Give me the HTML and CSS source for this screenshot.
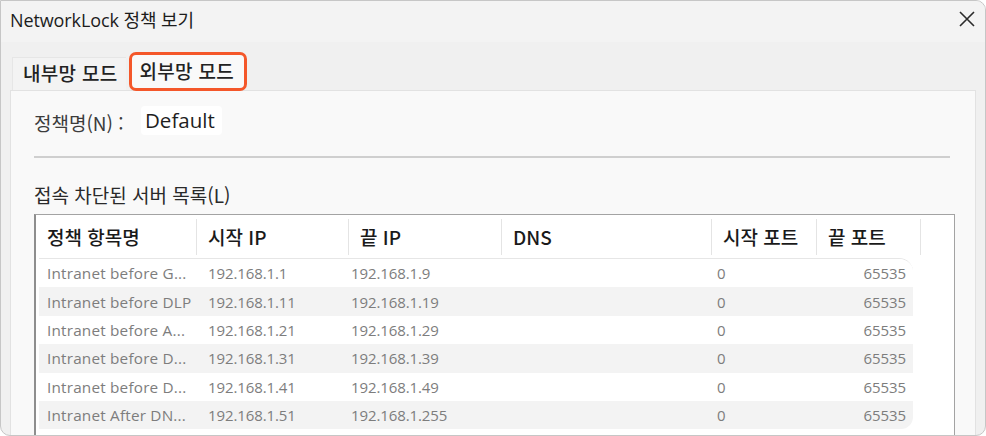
FILE: index.html
```html
<!DOCTYPE html>
<html lang="ko">

<head>
    <meta charset="utf-8">
    <title>NetworkLock 정책 보기</title>
    <link rel="stylesheet" href="styles.css">
</head>

<body>
    <div class="window">
        <div class="titlebar">
            <span class="title">NetworkLock 정책 보기</span>
            <svg class="close" width="18" height="18" viewBox="0 0 18 18">
                <path d="M2 2 L16 16 M16 2 L2 16" stroke="#2b2b2b" stroke-width="1.6" fill="none" />
            </svg>
        </div>

        <div class="tabs">
            <div class="tab">내부망 모드</div>
            <div class="tab active">외부망 모드</div>
        </div>

        <div class="panel">
            <div class="name-row">
                <span class="label">정책명(N) :</span>
                <span class="name-box">Default</span>
            </div>
            <div class="separator"></div>
            <div class="section-label">접속 차단된 서버 목록(L)</div>

            <div class="list">
                <div class="list-head">
                    <div class="col">정책 항목명</div>
                    <div class="col">시작 IP</div>
                    <div class="col">끝 IP</div>
                    <div class="col">DNS</div>
                    <div class="col">시작 포트</div>
                    <div class="col">끝 포트</div>
                </div>
                <div class="rows" id="rows"></div>
            </div>
        </div>
    </div>

    <script>
        // 차단 목록 데이터
        const items = [
            ['Intranet before G...', '192.168.1.1', '192.168.1.9', '', '0', '65535'],
            ['Intranet before DLP', '192.168.1.11', '192.168.1.19', '', '0', '65535'],
            ['Intranet before A...', '192.168.1.21', '192.168.1.29', '', '0', '65535'],
            ['Intranet before D...', '192.168.1.31', '192.168.1.39', '', '0', '65535'],
            ['Intranet before D...', '192.168.1.41', '192.168.1.49', '', '0', '65535'],
            ['Intranet After DN...', '192.168.1.51', '192.168.1.255', '', '0', '65535']
        ];

        const rows = document.getElementById('rows');
        items.forEach((item) => {
            const row = document.createElement('div');
            row.className = 'row';
            item.forEach((value) => {
                const cell = document.createElement('div');
                cell.className = 'cell';
                cell.textContent = value;
                row.appendChild(cell);
            });
            rows.appendChild(row);
        });
    </script>
</body>

</html>
```

FILE: styles.css
```css
* {
    box-sizing: border-box;
}

body {
    margin: 0;
    font-family: "Open Sans", "Noto Sans CJK KR", sans-serif;
    background-color: #ffffff;
}

.window {
    width: 986px;
    height: 436px;
    border: 1px solid #c6c6c6;
    border-radius: 0 10px 10px 10px;
    background-color: #f0f0f0;
    overflow: hidden;
    display: flex;
    flex-direction: column;
}

.titlebar {
    flex-shrink: 0;
    height: 41px;
    background-color: #f3f3f3;
    display: flex;
    align-items: center;
    justify-content: space-between;
    padding: 0 9px 0 9px;
}

.title {
    font-family: "Open Sans", "Noto Sans CJK KR", sans-serif;
    font-size: 18px;
    color: #1c1c1c;
    margin-top: -6px;
    letter-spacing: -0.1px;
}

.close {
    margin-top: -6px;
}

.tabs {
    flex-shrink: 0;
    height: 48px;
    display: flex;
    align-items: flex-end;
    padding-left: 11px;
}

.tab {
    font-family: "Noto Sans CJK KR", sans-serif;
    font-size: 19px;
    font-weight: 500;
    color: #222;
    height: 33px;
    line-height: 30px;
    padding: 0 8px 0 10px;
    background-color: #f3f3f3;
    border-left: 1px solid #e6e6e6;
    border-top: 1px solid #e6e6e6;
    letter-spacing: 0.3px;
}

.tab.active {
    height: 39px;
    margin-left: 3px;
    padding: 0 10px 0 8px;
    line-height: 32px;
    background-color: #f9f9f9;
    border: 3px solid #f4572a;
    border-radius: 7px;
    margin-bottom: -1px;
    position: relative;
}

.panel {
    flex: 1;
    min-height: 0;
    overflow: hidden;
    margin: 0 9px 0 9px;
    background-color: #f9f9f9;
    border: 1px solid #e2e2e2;
    border-bottom: none;
    padding: 15px 0 0 23px;
}

.name-row {
    display: flex;
    align-items: center;
    height: 29px;
}

.label {
    font-family: "Noto Sans CJK KR", sans-serif;
    font-size: 19px;
    color: #3c3c3c;
    width: 107px;
    margin-top: 3px;
}

.name-box {
    background-color: #ffffff;
    border-radius: 4px;
    height: 29px;
    line-height: 28px;
    padding: 0 7px 0 4px;
    font-size: 20.5px;
    color: #1e1e1e;
}

.separator {
    margin-top: 21px;
    width: 916px;
    height: 2px;
    background-color: #cfcfcf;
}

.section-label {
    font-family: "Noto Sans CJK KR", sans-serif;
    font-size: 19px;
    color: #2a2a2a;
    margin-top: 26px;
    height: 22px;
    line-height: 22px;
}

.list {
    margin-top: 8px;
    width: 921px;
    height: 240px;
    background-color: #ffffff;
    border: 1px solid #a3a3a3;
    border-left: 2px solid #8e8e8e;
    border-bottom: none;
}

.list-head {
    display: grid;
    grid-template-columns: 161px 152px 153px 210px 105px 104px;
    height: 43px;
    align-items: center;
}

.list-head .col {
    font-family: "Noto Sans CJK KR", sans-serif;
    font-size: 19px;
    font-weight: 500;
    color: #1a1a1a;
    padding-left: 11px;
    height: 36px;
    line-height: 36px;
    border-right: 1px solid #e4e4e4;
    white-space: nowrap;
}

.rows {
    margin-left: 3px;
    width: 874px;
    border-top: 1px solid #e6e6e6;
    border-radius: 0 14px 12px 0;
    overflow: hidden;
}

.row {
    display: grid;
    grid-template-columns: 158px 143px 162px 204px 100px 107px;
    height: 28.4px;
    align-items: center;
    background-color: #ffffff;
    line-height: 20px;
}

.row:nth-child(even) {
    background-color: #f3f3f3;
}

.cell {
    font-size: 15px;
    color: #7d7d7d;
    padding-left: 11px;
    white-space: nowrap;
    letter-spacing: -0.1px;
}

.cell:first-child {
    padding-left: 8px;
    font-size: 15.3px;
    letter-spacing: 0.2px;
}

.cell:last-child {
    text-align: right;
    padding-right: 7px;
}
```
